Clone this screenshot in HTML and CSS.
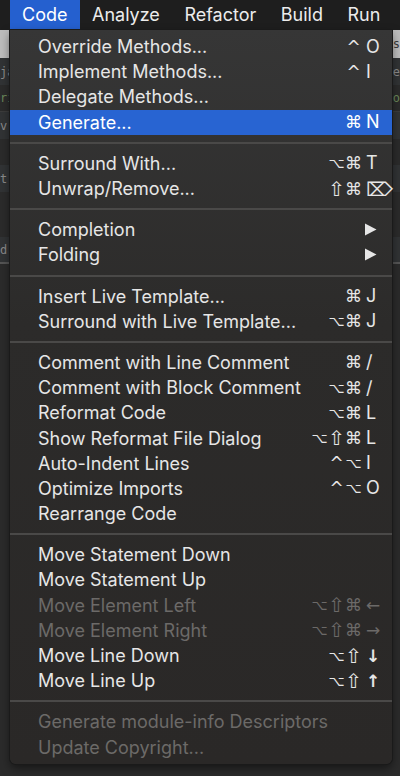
FILE: index.html
```html
<!DOCTYPE html>
<html lang="en">
<head>
<meta charset="utf-8">
<title>Code menu</title>
<link rel="stylesheet" href="styles.css">
</head>
<body>
<div class="screen">
  <nav class="menubar">
    <span class="mb-item active">Code</span>
    <span class="mb-item">Analyze</span>
    <span class="mb-item">Refactor</span>
    <span class="mb-item">Build</span>
    <span class="mb-item">Run</span>
  </nav>
  <div class="ide">
    <div class="tabstrip"><span class="code-l"></span><span class="code-r">s</span></div>
    <div class="ed-line"><span class="code-l">ja</span><span class="code-r">e</span></div>
    <div class="ed-line green"><span class="code-l">ri</span><span class="code-r">o</span></div>
    <div class="ed-line"><span class="code-l">v</span></div>
    <div class="ed-line gap"><span class="code-l">t</span></div>
    <div class="ed-line gap2"><span class="code-l">d</span></div>
  </div>

  <div class="menu">
    <div class="row"><span class="label">Override Methods...</span><span class="sc"><span class="m">^</span><span class="k">O</span></span></div>
    <div class="row"><span class="label">Implement Methods...</span><span class="sc"><span class="m">^</span><span class="k">I</span></span></div>
    <div class="row"><span class="label">Delegate Methods...</span></div>
    <div class="row selected"><span class="label">Generate...</span><span class="sc"><span class="m">⌘</span><span class="k">N</span></span></div>
    <div class="sep"></div>
    <div class="row"><span class="label">Surround With...</span><span class="sc"><span class="m opt">⌥</span><span class="m">⌘</span><span class="k">T</span></span></div>
    <div class="row"><span class="label">Unwrap/Remove...</span><span class="sc"><span class="m shift">⇧</span><span class="m">⌘</span><span class="k del">⌦</span></span></div>
    <div class="sep"></div>
    <div class="row"><span class="label">Completion</span><span class="sc"><svg class="sub" width="13" height="13" viewBox="0 0 13 13"><polygon points="1,0.5 12.5,6.5 1,12.5" fill="currentColor"/></svg></span></div>
    <div class="row"><span class="label">Folding</span><span class="sc"><svg class="sub" width="13" height="13" viewBox="0 0 13 13"><polygon points="1,0.5 12.5,6.5 1,12.5" fill="currentColor"/></svg></span></div>
    <div class="sep"></div>
    <div class="row"><span class="label">Insert Live Template...</span><span class="sc"><span class="m">⌘</span><span class="k">J</span></span></div>
    <div class="row"><span class="label">Surround with Live Template...</span><span class="sc"><span class="m opt">⌥</span><span class="m">⌘</span><span class="k">J</span></span></div>
    <div class="sep"></div>
    <div class="row"><span class="label">Comment with Line Comment</span><span class="sc"><span class="m">⌘</span><span class="k">/</span></span></div>
    <div class="row"><span class="label">Comment with Block Comment</span><span class="sc"><span class="m opt">⌥</span><span class="m">⌘</span><span class="k">/</span></span></div>
    <div class="row"><span class="label">Reformat Code</span><span class="sc"><span class="m opt">⌥</span><span class="m">⌘</span><span class="k">L</span></span></div>
    <div class="row"><span class="label">Show Reformat File Dialog</span><span class="sc"><span class="m opt">⌥</span><span class="m shift">⇧</span><span class="m">⌘</span><span class="k">L</span></span></div>
    <div class="row"><span class="label">Auto-Indent Lines</span><span class="sc"><span class="m">^</span><span class="m opt">⌥</span><span class="k">I</span></span></div>
    <div class="row"><span class="label">Optimize Imports</span><span class="sc"><span class="m">^</span><span class="m opt">⌥</span><span class="k">O</span></span></div>
    <div class="row"><span class="label">Rearrange Code</span></div>
    <div class="sep"></div>
    <div class="row"><span class="label">Move Statement Down</span></div>
    <div class="row"><span class="label">Move Statement Up</span></div>
    <div class="row disabled"><span class="label">Move Element Left</span><span class="sc"><span class="m opt">⌥</span><span class="m shift">⇧</span><span class="m">⌘</span><span class="k arrow">←</span></span></div>
    <div class="row disabled"><span class="label">Move Element Right</span><span class="sc"><span class="m opt">⌥</span><span class="m shift">⇧</span><span class="m">⌘</span><span class="k arrow">→</span></span></div>
    <div class="row"><span class="label">Move Line Down</span><span class="sc"><span class="m opt">⌥</span><span class="m shift">⇧</span><span class="k arrow bold">↓</span></span></div>
    <div class="row"><span class="label">Move Line Up</span><span class="sc"><span class="m opt">⌥</span><span class="m shift">⇧</span><span class="k arrow bold">↑</span></span></div>
    <div class="sep"></div>
    <div class="row disabled"><span class="label">Generate module-info Descriptors</span></div>
    <div class="row disabled"><span class="label">Update Copyright...</span></div>
  </div>
</div>
</body>
</html>
```
FILE: styles.css
```css
* { box-sizing: border-box; }
html, body { margin: 0; padding: 0; }
body {
  background: #2b2b2b;
  font-family: Inter, "Noto Sans", "DejaVu Sans", sans-serif;
  color: #e4e4e4;
}
.screen {
  position: relative;
  width: 400px;
  height: 776px;
  overflow: hidden;
  background: #2b2b2b;
}
.menubar {
  height: 30px;
  background: #1e1e1e;
  display: flex;
  align-items: stretch;
  padding-left: 10px;
  white-space: nowrap;
}
.mb-item {
  display: flex;
  align-items: center;
  padding: 0 12.5px 1px 12px;
  font-size: 18px;
  color: #ececec;
}
.mb-item.active { background: #2560cf; color: #fff; }

.ide { display: flex; flex-direction: column; }
.tabstrip {
  height: 28px;
  background: #bdbdbd;
  display: flex;
  justify-content: space-between;
  align-items: center;
  font-family: "DejaVu Sans Mono", monospace;
  font-size: 12px;
  color: #3a3a3a;
}
.ed-line {
  height: 27px;
  display: flex;
  justify-content: space-between;
  align-items: center;
  font-family: "DejaVu Sans Mono", monospace;
  font-size: 12px;
  color: #8a8a8a;
  background: #313335;
}
.ed-line.green { color: #6a8759; background: #2b2b2b; border-bottom: 1px solid #3c3c3c; }
.ed-line.gap { margin-top: 26px; }
.ed-line.gap2 { margin-top: 45px; border-bottom: 2px solid #555; }

.menu {
  position: absolute;
  top: 30px;
  left: 10px;
  width: 382px;
  padding: 4px 0 4.4px;
  background: linear-gradient(#363636, #2c2b2a 40%, #2a2827);
  border-radius: 0 0 6px 6px;
  box-shadow: 0 0 0 1px #1a1a1a, 0 4px 10px rgba(0,0,0,0.5);
}
.row {
  height: 25.2px;
  display: flex;
  align-items: center;
  justify-content: space-between;
  padding: 0 10px 0 28px;
  font-size: 18px;
  color: #e6e6e6;
  white-space: nowrap;
}
.row.selected { background: #2864d2; color: #fff; }
.row.disabled { color: #6c6a68; }
.sep {
  height: 16px;
  display: flex;
  align-items: center;
}
.sep::before {
  content: "";
  display: block;
  width: 100%;
  height: 2px;
  background: #4a4948;
}
.sc {
  display: flex;
  align-items: center;
  font-family: "DejaVu Sans", sans-serif;
}
.m {
  display: inline-block;
  width: 17px;
  text-align: center;
  font-size: 17px;
  line-height: 22px;
}
.m.opt { font-size: 14px; }
.m.shift { font-size: 20px; }
.k {
  display: inline-block;
  width: 16px;
  margin-left: 4px;
  text-align: left;
  font-family: Inter, sans-serif;
  font-size: 18px;
  line-height: 22px;
}
.k.del { font-family: "DejaVu Sans", sans-serif; font-size: 19px; }
.k.arrow { font-family: "DejaVu Sans", sans-serif; font-size: 17px; }
.k.bold { font-weight: bold; }
.sub { margin-right: 5px; display: block; }
```
